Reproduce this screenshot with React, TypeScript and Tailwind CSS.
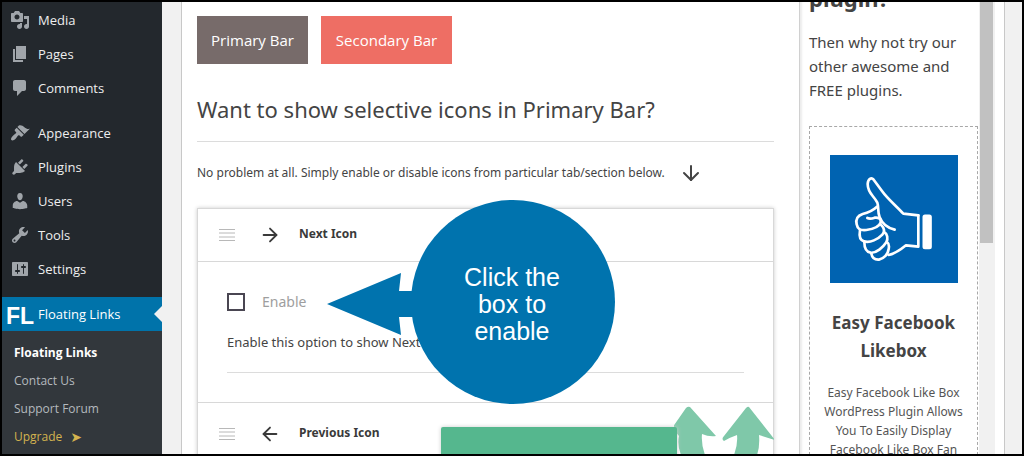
import { useState } from "react";
import { ArrowDown, ArrowLeft, ArrowRight } from "lucide-react";

const MENU_TOP = [
  {
    label: "Media",
    d: "M13 11V4c0-.55-.45-1-1-1h-1.67L9 1H5L3.67 3H2c-.55 0-1 .45-1 1v7c0 .55.45 1 1 1h10c.55 0 1-.45 1-1zM7 4.5c1.38 0 2.5 1.12 2.5 2.5S8.38 9.5 7 9.5 4.5 8.38 4.5 7 5.62 4.5 7 4.5zM14 6h5v10.5c0 1.38-1.12 2.5-2.5 2.5S14 17.88 14 16.5s1.12-2.5 2.5-2.5c.17 0 .34.02.5.05V9h-3V6zm-4 8.05V13h2v3.5c0 1.38-1.12 2.5-2.5 2.5S7 17.88 7 16.5 8.12 14 9.5 14c.17 0 .34.02.5.05z",
  },
  { label: "Pages", d: "M6 15V2h10v13H6zm-1 1h8v2H3V5h2v11z" },
  {
    label: "Comments",
    d: "M5 2h9c1.1 0 2 .9 2 2v7c0 1.1-.9 2-2 2h-2l-5 5v-5H5c-1.1 0-2-.9-2-2V4c0-1.1.9-2 2-2z",
  },
];

const MENU_ADMIN = [
  {
    label: "Appearance",
    d: "M14.48 11.06L7.41 3.99l1.5-1.5c.5-.56 2.3-.47 3.51.32 1.21.8 1.43 1.28 2.91 2.1 1.18.64 2.45 1.26 4.45.85zm-.71.71L6.7 4.7 4.93 6.47c-.39.39-.39 1.02 0 1.41l1.06 1.06c.39.39.39 1.03 0 1.42-.6.6-1.43 1.11-2.21 1.69-.35.26-.7.53-1.01.84C1.43 14.23.4 16.08 1.4 17.07c.99 1 2.84-.03 4.18-1.36.31-.31.58-.66.85-1.02.57-.78 1.08-1.61 1.69-2.21.39-.39 1.02-.39 1.41 0l1.06 1.06c.39.39 1.02.39 1.41 0z",
  },
  {
    label: "Plugins",
    d: "M13.11 4.36L9.87 7.6 8 5.73l3.24-3.24c.35-.34 1.05-.2 1.56.32.52.51.66 1.21.31 1.55zm-8 1.77l.91-1.12 9.01 9.01-1.19.84c-.71.71-2.63 1.16-3.82 1.16H6.14L4.9 17.26c-.59.59-1.54.59-2.12 0-.59-.58-.59-1.53 0-2.12l1.24-1.24v-3.88c0-1.13.4-3.19 1.09-3.89zm7.26 3.97l3.24-3.24c.34-.35 1.04-.21 1.55.31.52.51.66 1.21.31 1.55l-3.24 3.25z",
  },
  {
    label: "Users",
    d: "M10 9.25c-2.27 0-2.73-3.44-2.73-3.44C7 4.02 7.82 2 9.97 2c2.16 0 2.98 2.02 2.71 3.81 0 0-.41 3.44-2.68 3.44zm0 2.57L12.72 10c2.39 0 4.52 2.33 4.52 4.53v2.49s-3.65 1.13-7.24 1.13c-3.65 0-7.24-1.13-7.24-1.13v-2.49c0-2.25 1.94-4.48 4.47-4.48z",
  },
  {
    label: "Tools",
    d: "M16.68 9.77c-1.34 1.34-3.3 1.67-4.95.99l-5.41 6.52c-.99.99-2.59.99-3.58 0s-.99-2.59 0-3.57l6.52-5.42c-.68-1.65-.35-3.61.99-4.95 1.28-1.28 3.12-1.62 4.72-1.06l-2.89 2.89 2.82 2.82 2.86-2.87c.53 1.58.18 3.39-1.08 4.65zM3.81 16.21c.4.39 1.04.39 1.43 0 .4-.4.4-1.04 0-1.43-.39-.4-1.03-.4-1.43 0-.39.39-.39 1.03 0 1.43z",
  },
  {
    label: "Settings",
    d: "M18 16V4c0-.55-.45-1-1-1H3c-.55 0-1 .45-1 1v12c0 .55.45 1 1 1h14c.55 0 1-.45 1-1zM8 11h1c.55 0 1 .45 1 1s-.45 1-1 1H8v1.5c0 .28-.22.5-.5.5s-.5-.22-.5-.5V13H6c-.55 0-1-.45-1-1s.45-1 1-1h1V5.5c0-.28.22-.5.5-.5s.5.22.5.5V11zm5-2h-1c-.55 0-1-.45-1-1s.45-1 1-1h1V5.5c0-.28.22-.5.5-.5s.5.22.5.5V7h1c.55 0 1 .45 1 1s-.45 1-1 1h-1v5.5c0 .28-.22.5-.5.5s-.5-.22-.5-.5V9z",
  },
];

function MenuGroup({ items }: { items: { label: string; d: string }[] }) {
  return (
    <ul>
      {items.map((item) => (
        <li key={item.label}>
          <a href="#" className="flex h-[34px] items-center gap-2 pl-2 text-[13px] text-[#eeeeee]">
            <svg viewBox="0 0 20 20" className="size-5 fill-[#a0a5aa]">
              <path d={item.d} />
            </svg>
            <span className="pt-0.5">{item.label}</span>
          </a>
        </li>
      ))}
    </ul>
  );
}

function AdminMenu() {
  return (
    <nav className="w-40 shrink-0 bg-[#23282d] pt-px font-['Open_Sans','Noto_Sans',sans-serif]">
      <MenuGroup items={MENU_TOP} />
      <div className="h-[11px]" />
      <MenuGroup items={MENU_ADMIN} />
      <div className="h-[11px]" />
      <a href="#" className="flex h-[34px] items-center bg-[#0073aa] text-[13px] text-white">
        <span className="w-9 pt-1 pl-1 font-['Liberation_Sans',sans-serif] text-[23px] leading-6 font-bold">FL</span>
        <span className="flex-1 pt-0.5">Floating Links</span>
        <svg viewBox="0 0 8 16" className="h-4 w-2 fill-[#f1f1f1]">
          <path d="M8 0v16L0 8z" />
        </svg>
      </a>
      <ul className="h-full bg-[#32373c] pt-2 text-[12px] leading-7 text-[#b4b9be]">
        <li><a href="#" className="block pl-3 font-bold text-white">Floating Links</a></li>
        <li><a href="#" className="block pl-3">Contact Us</a></li>
        <li><a href="#" className="block pl-3">Support Forum</a></li>
        <li>
          <a href="#" className="flex gap-2 pl-3 text-[#d3b34f]">
            Upgrade <span className="font-['DejaVu_Sans',sans-serif] text-[14px]">➤</span>
          </a>
        </li>
      </ul>
    </nav>
  );
}

function DragHandle() {
  return (
    <svg viewBox="0 0 16 12" className="h-3 w-4 stroke-[#b8b8b8]" fill="none">
      <path d="M0 .5h16M0 4h16M0 8h16M0 11.5h16" />
    </svg>
  );
}

function SectionHeader({ title, back }: { title: string; back?: boolean }) {
  const Arrow = back ? ArrowLeft : ArrowRight;
  return (
    <div className="flex items-center pl-[21px]">
      <DragHandle />
      <Arrow size={22} strokeWidth={2} className="mr-[18px] ml-6 text-[#3a3a3a]" />
      <h3 className="pb-0.5 text-[12px] font-bold text-[#3a3a3a]">{title}</h3>
    </div>
  );
}

function Callout() {
  return (
    <div className="absolute top-[198px] left-[325px] h-[204px] w-72">
      <svg viewBox="0 0 288 204" className="absolute inset-0 size-full fill-[#0073ae]">
        <circle cx="186" cy="102" r="102" />
        <path d="M0 104L74 73L72 91H90V117H72L74 135Z" />
      </svg>
      <p className="absolute top-16 right-0 w-[206px] text-center font-['Liberation_Sans',sans-serif] text-[25px] leading-[27px] text-white">
        Click the
        <br />
        box to
        <br />
        enable
      </p>
    </div>
  );
}

function ThumbsUp() {
  return (
    <svg viewBox="150 105 384 384" className="size-32" fill="none" stroke="white" strokeWidth="8" strokeLinecap="round" strokeLinejoin="round">
      <path fill="#0063b1" stroke="none" d="M150 105h384v384H150z" />
      <path d="M415 286L370 281C350 259 322 236 306 213L281 179C274 171 264 176 263 192C263 220 281 226 292 248C297 262 292 276 299 292C306 310 322 324 344 329" />
      <path d="M291 260C279 271 264 278 248 282C230 288 227 300 230 313C233 329 243 332 259 330C280 327 298 320 302 307C304 294 294 292 284 293C276 296 269 298 262 294" />
      <path d="M240 331C237 348 240 361 252 364C270 370 295 357 307 344C316 334 311 322 302 313" />
      <path d="M253 366C253 386 259 396 272 398C289 400 309 382 319 367C325 356 322 341 313 337" />
      <path d="M274 400C276 413 284 420 297 419C312 416 324 403 326 387C328 377 327 370 321 366" />
      <path d="M326 405C345 401 361 390 378 376L415 380V286" />
      <rect x="430" y="286" width="23" height="99" rx="5" fill="white" strokeWidth="5" />
    </svg>
  );
}

function PluginPromo() {
  return (
    <aside className="flex w-[196px] shrink-0 border-l border-[#d0d0d0] shadow-[inset_3px_0_2px_-1px_#ececec]">
      <div className="flex min-w-0 flex-1 flex-col pl-[9px] text-[#444444]">
        <h2 className="-mt-5 text-[22px] leading-8 font-bold">plugin?</h2>
        <p className="mt-4 text-[15px] leading-6">Then why not try our other awesome and FREE plugins.</p>
        <div className="mt-6 flex flex-1 flex-col items-center border border-dashed border-[#a8a8a8] px-3 pt-7 text-center">
          <ThumbsUp />
          <h3 className="mt-[26px] text-[17px] leading-7 font-bold">Easy Facebook Likebox</h3>
          <p className="mt-[18px] text-[12px] leading-[19px] text-[#555555]">
            Easy Facebook Like Box WordPress Plugin Allows You To Easily Display Facebook Like Box Fan
          </p>
        </div>
      </div>
      {/* scrollbar */}
      <div className="ml-px w-4 bg-[#f1f1f1] pr-0.5 pl-px">
        <div className="h-[241px] bg-[#c1c1c1]" />
      </div>
    </aside>
  );
}

export default function App() {
  const [enabled, setEnabled] = useState(false);

  return (
    <div className="relative flex h-screen overflow-hidden border-2 border-black bg-[#f1f1f1] font-['Noto_Sans','Open_Sans',sans-serif]">
      <AdminMenu />

      <div className="mr-[17px] ml-[19px] flex min-w-0 flex-1 border-x border-[#c8c8c8] bg-white pr-[9px] pl-[15px]">
        <main className="mr-[25px] min-w-0 flex-1 pt-3.5">
          <div className="flex gap-[13px] font-['Open_Sans','Noto_Sans',sans-serif] text-[15px] text-white">
            <button type="button" className="h-12 w-[111px] bg-[#776b6a]">Primary Bar</button>
            <button type="button" className="h-12 w-[131px] bg-[#ee6e64]">Secondary Bar</button>
          </div>

          <h1 className="mt-[29px] border-b border-[#dcdcdc] pb-4 text-[22px] leading-8 text-[#444444]">
            Want to show selective icons in Primary Bar?
          </h1>
          <p className="mt-5 flex h-[22px] items-center gap-3.5 text-[12px] text-[#444444]">
            No problem at all. Simply enable or disable icons from particular tab/section below.
            <ArrowDown size={24} />
          </p>

          <div className="mt-6 h-[300px] border border-[#d8d8d8] shadow-[0_0_4px_#cccccc]">
            <div className="py-[15px]">
              <SectionHeader title="Next Icon" />
            </div>
            <div className="h-[142px] border-y border-[#d8d8d8] px-[29px] pt-[30px] text-[#444444]">
              <label className="flex items-center gap-[17px] text-[14px] leading-5 text-[#9e9e9e]">
                <input
                  type="checkbox"
                  checked={enabled}
                  onChange={() => setEnabled(!enabled)}
                  className="size-[18px] appearance-none border-2 border-[#4a4652] checked:bg-[#0073aa]"
                />
                Enable
              </label>
              <p className="mt-[19px] border-b border-[#dcdcdc] pb-[19px] text-[13px] leading-[22px]">
                Enable this option to show Next Icon
              </p>
            </div>
            <div className="py-5">
              <SectionHeader title="Previous Icon" back />
            </div>
          </div>
        </main>

        <PluginPromo />
      </div>

      {/* tutorial annotations over the page */}
      <svg viewBox="0 0 100 50" className="absolute top-[403px] left-[672px] h-[50px] w-[100px] fill-[#7fc8a9]">
        <path d="M16 2L42 31Q35 32 28 29Q27 39 31 50H7Q3 40 5 31L-2 23L12 3Q14 1 16 2Z" />
        <path d="M75 2L101 35Q94 33 85 30Q86 41 83 50H60Q64 39 63 30Q57 32 50 36Q47 34 50 31L72 3Q74 1 75 2Z" />
      </svg>
      <div className="absolute top-[425px] left-[439px] h-8 w-[236px] rounded-xs bg-[#55b78e] shadow-[0_0_4px_#cccccc]" />
      <Callout />
    </div>
  );
}
